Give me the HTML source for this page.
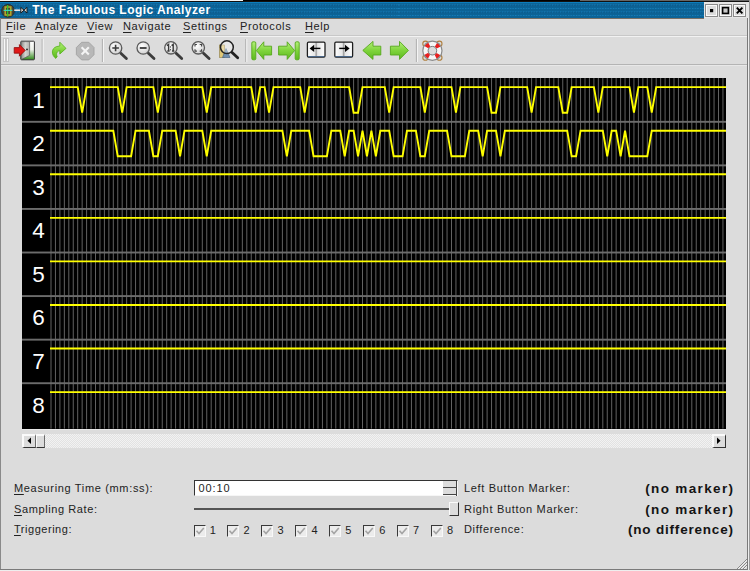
<!DOCTYPE html>
<html><head><meta charset="utf-8">
<style>
html,body{margin:0;padding:0;}
body{width:750px;height:571px;overflow:hidden;position:relative;background:#dcdcdc;font-family:"Liberation Sans",sans-serif;color:#222;}
.a{position:absolute;}
.t{position:absolute;white-space:nowrap;font-size:11px;line-height:13px;letter-spacing:0.6px;}
.lbl{position:absolute;left:24.5px;width:28px;text-align:center;color:#fff;font-size:22.5px;line-height:25px;}
u{text-decoration:underline;text-underline-offset:2px;text-decoration-thickness:1px;}
.tb{background-color:#0b6396;background-image:radial-gradient(circle at 50% 50%, rgba(40,160,225,0.75) 0, rgba(40,160,225,0.0) 0.9px),radial-gradient(circle at 50% 50%, rgba(0,40,70,0.35) 0, rgba(0,40,70,0) 1px);background-size:2.67px 3.5px,2.67px 3.5px;background-position:0.5px 1.5px,1.8px 3.2px;}
.cb{position:absolute;top:525px;width:10px;height:10px;border-top:1px solid #3a3a3a;border-left:1px solid #3a3a3a;border-right:1px solid #f8f8f8;border-bottom:1px solid #f8f8f8;background:#ececec;}
.cb svg{position:absolute;left:0;top:0}
.cbl{position:absolute;top:524px;font-size:11px;line-height:13px;color:#222;}
</style></head><body>
<!-- top strip -->
<div class="a" style="left:0;top:0;width:243px;height:1px;background:#f4f4f4"></div>
<div class="a" style="left:243px;top:0;width:337px;height:1.5px;background:#000"></div><div class="a" style="left:580px;top:0;width:170px;height:1.5px;background:#666"></div>
<div class="a" style="left:0;top:1px;width:750px;height:1px;background:#111"></div>
<!-- title bar -->
<svg class="a" style="left:0;top:2px" width="704" height="16"><defs><pattern id="ptb" x="0.3" y="0" width="2.64" height="7" patternUnits="userSpaceOnUse"><rect x="0" y="0" width="2.64" height="7" fill="#0c6396"/><rect x="0.2" y="2" width="1" height="1.6" fill="#1478b4"/><rect x="1.2" y="3.2" width="1" height="1" fill="#0a5283"/><rect x="0.2" y="6.1" width="1.1" height="1" fill="#1a8ccc"/><rect x="1.2" y="6.9" width="1" height="0.1" fill="#0a5283"/></pattern></defs><rect width="704" height="16" fill="url(#ptb)"/></svg>
<div class="a" style="left:0;top:2px;width:704px;height:1px;background:#0c7dbd"></div>
<div class="a" style="left:0;top:17.5px;width:704px;height:1px;background:#7a7066"></div>
<div class="a" style="left:704px;top:2px;width:46px;height:16px;background:#e6e6e6"></div>
<div class="t" style="left:32.2px;top:3px;font-size:12px;line-height:14px;font-weight:bold;color:#fff;letter-spacing:0.45px">The Fabulous Logic Analyzer</div>
<!-- window frame -->
<div class="a" style="left:0;top:18px;width:1.3px;height:553px;background:#8a8a8a"></div>
<div class="a" style="left:747px;top:18px;width:1px;height:553px;background:#7a7a7a"></div>
<div class="a" style="left:748px;top:18px;width:1px;height:553px;background:#eeeeee"></div>
<div class="a" style="left:749px;top:0;width:1px;height:571px;background:#9a9a9a"></div>
<div class="a" style="left:0;top:569px;width:748px;height:1px;background:#7a7a7a"></div>
<div class="a" style="left:0;top:570px;width:750px;height:1px;background:#eeeeee"></div>
<!-- menu -->
<div class="t" style="left:6px;top:20px"><u>F</u>ile</div>
<div class="t" style="left:35px;top:20px"><u>A</u>nalyze</div>
<div class="t" style="left:87px;top:20px"><u>V</u>iew</div>
<div class="t" style="left:123px;top:20px"><u>N</u>avigate</div>
<div class="t" style="left:183px;top:20px"><u>S</u>ettings</div>
<div class="t" style="left:240px;top:20px"><u>P</u>rotocols</div>
<div class="t" style="left:305px;top:20px"><u>H</u>elp</div>
<div class="a" style="left:1px;top:35px;width:746px;height:1px;background:#c8c8c8"></div>
<div class="a" style="left:1px;top:36px;width:746px;height:1px;background:#f2f2f2"></div>
<div class="a" style="left:1px;top:64px;width:746px;height:1px;background:#b4b4b4"></div>
<div class="a" style="left:1px;top:65px;width:746px;height:1px;background:#e8e8e8"></div>
<svg class="a" style="left:0;top:0" width="750" height="70" viewBox="0 0 750 70">
<defs>
<linearGradient id="gdoor" x1="0" y1="0" x2="0" y2="1"><stop offset="0" stop-color="#fff"/><stop offset="0.45" stop-color="#eef2ea"/><stop offset="1" stop-color="#2d8a16"/></linearGradient>
<linearGradient id="gpanel" x1="0" y1="0" x2="1" y2="0"><stop offset="0" stop-color="#8c8c88"/><stop offset="0.5" stop-color="#d4d4d0"/><stop offset="1" stop-color="#b0b0ac"/></linearGradient>
<linearGradient id="ggreen" x1="0" y1="0" x2="0" y2="1"><stop offset="0" stop-color="#b4f07a"/><stop offset="0.5" stop-color="#7fd43c"/><stop offset="1" stop-color="#5cb81e"/></linearGradient>
<radialGradient id="glens" cx="0.4" cy="0.35" r="0.7"><stop offset="0" stop-color="#ffffff"/><stop offset="1" stop-color="#cfcfcf"/></radialGradient>
<linearGradient id="gpage" x1="0" y1="0" x2="1" y2="0"><stop offset="0" stop-color="#fff"/><stop offset="0.42" stop-color="#e6e6e6"/><stop offset="0.5" stop-color="#9a9a9a"/><stop offset="0.58" stop-color="#e6e6e6"/><stop offset="1" stop-color="#fff"/></linearGradient>
</defs>
<!-- title icon -->
<circle cx="8" cy="10.8" r="6.4" fill="#45453a" stroke="#2a2a24" stroke-width="0.8"/>
<rect x="5.2" y="7" width="5.6" height="8" fill="none" stroke="#b8aa28" stroke-width="1.5"/>
<path d="M7.6,5V16.6" stroke="#34c02c" stroke-width="1.3"/>
<path d="M3.6,10.4H12.4" stroke="#3cd4b8" stroke-width="1.2"/>
<path d="M14.2,10.2H21.5" stroke="#e8e8e8" stroke-width="1.6"/>
<path d="M20.8,7.4L24,10.2L20.8,13ZM27,7.4L23.8,10.2L27,13Z" fill="#d8d8d8" stroke="#111" stroke-width="0.9"/>
<!-- window buttons -->
<g>
<rect x="705.5" y="4.5" width="12" height="12" fill="#dcdcdc" stroke="#8a8a8a" stroke-width="1"/>
<rect x="706.5" y="5.5" width="10" height="10" fill="none" stroke="#fafafa" stroke-width="1"/>
<rect x="710" y="9" width="3.2" height="3.2" fill="#000"/>
<rect x="719.5" y="4.5" width="12" height="12" fill="#dcdcdc" stroke="#8a8a8a" stroke-width="1"/>
<rect x="720.5" y="5.5" width="10" height="10" fill="none" stroke="#fafafa" stroke-width="1"/>
<rect x="722.6" y="7.6" width="5.8" height="5.8" fill="#c8c8c8" stroke="#000" stroke-width="1.6"/>
<rect x="733.5" y="4.5" width="12" height="12" fill="#dcdcdc" stroke="#8a8a8a" stroke-width="1"/>
<rect x="734.5" y="5.5" width="10" height="10" fill="none" stroke="#fafafa" stroke-width="1"/>
<path d="M736.8,7.6L742.4,13.4M742.4,7.6L736.8,13.4" stroke="#000" stroke-width="1.9"/>
</g>
<!-- grip -->
<rect x="3.3" y="38.7" width="2.4" height="22.8" fill="#f8f8f8" stroke="#b0b0b0" stroke-width="0.6"/>
<rect x="6.3" y="38.7" width="2.4" height="22.8" fill="#f8f8f8" stroke="#b0b0b0" stroke-width="0.6"/>
<!-- separators -->
<g stroke-width="1">
<path d="M42.2,39V62M102.4,39V62M245.8,39V62M416.4,39V62" stroke="#a8a8a8"/>
<path d="M43.2,39V62M103.4,39V62M246.8,39V62M417.4,39V62" stroke="#f6f6f6"/>
</g>
<!-- exit door -->
<rect x="20.8" y="41.2" width="13.6" height="18.6" rx="0.8" fill="url(#gdoor)" stroke="#333" stroke-width="1"/>
<path d="M21.2,41.6H29.6V55.4L21.2,59.6Z" fill="url(#gpanel)" stroke="#555" stroke-width="0.7"/>
<circle cx="27" cy="49.4" r="0.9" fill="#222"/>
<path d="M14.2,47.6H19.4V44.6L25.2,50.4L19.4,56.2V53.2H14.2Z" fill="#e01818" stroke="#8a0a0a" stroke-width="0.8"/>
<!-- green curved arrow -->
<path d="M55.8,58.4C51.2,55 51,48.4 56.6,46.6L59.8,46V42.2L66,48.4L59.8,54V50.6C56.8,51.2 55.8,53.8 57.2,56.6Z" fill="url(#ggreen)" stroke="#52ae18" stroke-width="0.8"/>
<!-- stop -->
<path d="M81.6,42.3H88.8L94,47.5V54.7L88.8,59.9H81.6L76.4,54.7V47.5Z" fill="#b8b8b8" stroke="#a2a2a2" stroke-width="0.9"/>
<path d="M81.6,47.3L88.8,54.5M88.8,47.3L81.6,54.5" stroke="#f4f4f4" stroke-width="2.1"/>
<!-- magnifiers -->
<g id="mag">
<path d="M120.8,53.2L126.4,58.6" stroke="#3c3c3c" stroke-width="2.8" stroke-linecap="round"/>
<circle cx="115.6" cy="48" r="6.2" fill="url(#glens)" stroke="#5a5a5a" stroke-width="1.3"/>
<path d="M112.3,48H118.9M115.6,44.7V51.3" stroke="#3a3a3a" stroke-width="1.6"/>
</g>
<path d="M148.4,53.2L154,58.6" stroke="#3c3c3c" stroke-width="2.8" stroke-linecap="round"/>
<circle cx="143.2" cy="48" r="6.2" fill="url(#glens)" stroke="#5a5a5a" stroke-width="1.3"/>
<path d="M139.8,48H146.6" stroke="#3a3a3a" stroke-width="1.8"/>
<path d="M176.1,53.2L181.7,58.6" stroke="#3c3c3c" stroke-width="2.8" stroke-linecap="round"/>
<circle cx="170.9" cy="47.8" r="6.2" fill="url(#glens)" stroke="#5a5a5a" stroke-width="1.3"/>
<path d="M167,45.6L168.6,44.4V51M167.3,51H169.6M171.6,45.6L173.2,44.4V51M172,51H174.3" stroke="#3a3a3a" stroke-width="1.4" fill="none"/><rect x="169.9" y="46.4" width="1.1" height="1.1" fill="#3a3a3a"/><rect x="169.9" y="49.2" width="1.1" height="1.1" fill="#3a3a3a"/>
<path d="M203.5,53.2L209.1,58.6" stroke="#3c3c3c" stroke-width="2.8" stroke-linecap="round"/>
<circle cx="198.3" cy="47.8" r="6.2" fill="url(#glens)" stroke="#5a5a5a" stroke-width="1.3"/>
<path d="M195,46.4V44.5H196.9M199.7,44.5H201.6V46.4M201.6,49.2V51.1H199.7M196.9,51.1H195V49.2" stroke="#444" stroke-width="1.1" fill="none"/>
<!-- image zoom -->
<rect x="219.6" y="45" width="5" height="12.5" fill="#e0c878" stroke="#8a7a40" stroke-width="0.6"/>
<path d="M222.5,57.5L226,48.6L230,57.5Z" fill="#6f8fb0" stroke="#3c5a78" stroke-width="0.6"/>
<path d="M232.1,52.4L237.7,57.8" stroke="#222" stroke-width="2.8" stroke-linecap="round"/>
<circle cx="226.9" cy="47.2" r="6.4" fill="rgba(255,255,255,0.35)" stroke="#222" stroke-width="1.5"/>
<!-- nav first/last -->
<g fill="url(#ggreen)" stroke="#56a81c" stroke-width="0.9" stroke-linejoin="round">
<rect x="251.8" y="41.8" width="4" height="18" rx="1.2"/>
<path d="M256.4,50.6L263.8,41.8V46.2H271.6V55H263.8V59.4Z"/>
<rect x="295.2" y="41.8" width="4" height="18" rx="1.2"/>
<path d="M294.6,50.6L287.2,41.8V46.2H278.6V55H287.2V59.4Z"/>
<path d="M362.8,50.4L373,41.4V46.2H380.8V55H373V59.4Z"/>
<path d="M408.4,50.4L399.5,41.4V46.2H390.4V55H399.5V59.4Z"/>
</g>
<!-- books -->
<g>
<rect x="307.4" y="42.2" width="17.6" height="14.8" rx="1.2" fill="url(#gpage)" stroke="#1e1e1e" stroke-width="1.3"/>
<path d="M308,56.6H324.4" stroke="#4a6a90" stroke-width="1"/>
<path d="M309.6,48.4L314.2,44.8V52Z" fill="#000"/>
<path d="M313,48.4H320.4" stroke="#000" stroke-width="1.4"/>
<rect x="334.8" y="42.2" width="17.8" height="14.8" rx="1.2" fill="url(#gpage)" stroke="#1e1e1e" stroke-width="1.3"/>
<path d="M335.4,56.6H352" stroke="#4a6a90" stroke-width="1"/>
<path d="M349.6,48.4L345,44.8V52Z" fill="#000"/>
<path d="M339.2,48.4H346.4" stroke="#000" stroke-width="1.4"/>
</g>
<!-- lifebuoy -->
<g>
<circle cx="425.4" cy="43.7" r="2.6" fill="none" stroke="#b08040" stroke-width="1.1"/>
<circle cx="439.4" cy="43.7" r="2.6" fill="none" stroke="#b08040" stroke-width="1.1"/>
<circle cx="425.4" cy="57.7" r="2.6" fill="none" stroke="#b08040" stroke-width="1.1"/>
<circle cx="439.4" cy="57.7" r="2.6" fill="none" stroke="#b08040" stroke-width="1.1"/>
<circle cx="432.4" cy="50.7" r="7" fill="none" stroke="#f6f6f6" stroke-width="5.2"/>
<circle cx="432.4" cy="50.7" r="7" fill="none" stroke="#e82020" stroke-width="4.6" stroke-dasharray="4 6.996" stroke-dashoffset="-3.5"/>
<circle cx="432.4" cy="50.7" r="9.6" fill="none" stroke="#8a8a8a" stroke-width="1.2"/>
<circle cx="432.4" cy="50.7" r="4.3" fill="#dcdcdc" stroke="#7a7a7a" stroke-width="1"/>
</g>
</svg>

<svg width="704" height="351" viewBox="22 78 704 351" style="position:absolute;left:22px;top:78px;display:block">
<rect x="22" y="78" width="704" height="351" fill="#000"/>
<path d="M51.00,78V428.6 M55.45,78V428.6 M59.90,78V428.6 M64.35,78V428.6 M68.80,78V428.6 M73.25,78V428.6 M77.70,78V428.6 M82.15,78V428.6 M86.60,78V428.6 M91.05,78V428.6 M95.50,78V428.6 M99.95,78V428.6 M104.40,78V428.6 M108.85,78V428.6 M113.30,78V428.6 M117.75,78V428.6 M122.20,78V428.6 M126.65,78V428.6 M131.10,78V428.6 M135.55,78V428.6 M140.00,78V428.6 M144.45,78V428.6 M148.90,78V428.6 M153.35,78V428.6 M157.80,78V428.6 M162.25,78V428.6 M166.70,78V428.6 M171.15,78V428.6 M175.60,78V428.6 M180.05,78V428.6 M184.50,78V428.6 M188.95,78V428.6 M193.40,78V428.6 M197.85,78V428.6 M202.30,78V428.6 M206.75,78V428.6 M211.20,78V428.6 M215.65,78V428.6 M220.10,78V428.6 M224.55,78V428.6 M229.00,78V428.6 M233.45,78V428.6 M237.90,78V428.6 M242.35,78V428.6 M246.80,78V428.6 M251.25,78V428.6 M255.70,78V428.6 M260.15,78V428.6 M264.60,78V428.6 M269.05,78V428.6 M273.50,78V428.6 M277.95,78V428.6 M282.40,78V428.6 M286.85,78V428.6 M291.30,78V428.6 M295.75,78V428.6 M300.20,78V428.6 M304.65,78V428.6 M309.10,78V428.6 M313.55,78V428.6 M318.00,78V428.6 M322.45,78V428.6 M326.90,78V428.6 M331.35,78V428.6 M335.80,78V428.6 M340.25,78V428.6 M344.70,78V428.6 M349.15,78V428.6 M353.60,78V428.6 M358.05,78V428.6 M362.50,78V428.6 M366.95,78V428.6 M371.40,78V428.6 M375.85,78V428.6 M380.30,78V428.6 M384.75,78V428.6 M389.20,78V428.6 M393.65,78V428.6 M398.10,78V428.6 M402.55,78V428.6 M407.00,78V428.6 M411.45,78V428.6 M415.90,78V428.6 M420.35,78V428.6 M424.80,78V428.6 M429.25,78V428.6 M433.70,78V428.6 M438.15,78V428.6 M442.60,78V428.6 M447.05,78V428.6 M451.50,78V428.6 M455.95,78V428.6 M460.40,78V428.6 M464.85,78V428.6 M469.30,78V428.6 M473.75,78V428.6 M478.20,78V428.6 M482.65,78V428.6 M487.10,78V428.6 M491.55,78V428.6 M496.00,78V428.6 M500.45,78V428.6 M504.90,78V428.6 M509.35,78V428.6 M513.80,78V428.6 M518.25,78V428.6 M522.70,78V428.6 M527.15,78V428.6 M531.60,78V428.6 M536.05,78V428.6 M540.50,78V428.6 M544.95,78V428.6 M549.40,78V428.6 M553.85,78V428.6 M558.30,78V428.6 M562.75,78V428.6 M567.20,78V428.6 M571.65,78V428.6 M576.10,78V428.6 M580.55,78V428.6 M585.00,78V428.6 M589.45,78V428.6 M593.90,78V428.6 M598.35,78V428.6 M602.80,78V428.6 M607.25,78V428.6 M611.70,78V428.6 M616.15,78V428.6 M620.60,78V428.6 M625.05,78V428.6 M629.50,78V428.6 M633.95,78V428.6 M638.40,78V428.6 M642.85,78V428.6 M647.30,78V428.6 M651.75,78V428.6 M656.20,78V428.6 M660.65,78V428.6 M665.10,78V428.6 M669.55,78V428.6 M674.00,78V428.6 M678.45,78V428.6 M682.90,78V428.6 M687.35,78V428.6 M691.80,78V428.6 M696.25,78V428.6 M700.70,78V428.6 M705.15,78V428.6 M709.60,78V428.6 M714.05,78V428.6 M718.50,78V428.6 M722.95,78V428.6" stroke="#747474" stroke-width="0.85" fill="none"/>
<rect x="22" y="120.85" width="704" height="1.9" fill="#6c6c6c"/>
<rect x="22" y="164.42" width="704" height="1.9" fill="#6c6c6c"/>
<rect x="22" y="207.99" width="704" height="1.9" fill="#6c6c6c"/>
<rect x="22" y="251.56" width="704" height="1.9" fill="#6c6c6c"/>
<rect x="22" y="295.13" width="704" height="1.9" fill="#6c6c6c"/>
<rect x="22" y="338.70" width="704" height="1.9" fill="#6c6c6c"/>
<rect x="22" y="382.27" width="704" height="1.9" fill="#6c6c6c"/>
<path d="M50,87.13 L51.00,87.13 L55.45,87.13 L59.90,87.13 L64.35,87.13 L68.80,87.13 L73.25,87.13 L77.70,87.13 L82.15,112.68 L86.60,87.13 L91.05,87.13 L95.50,87.13 L99.95,87.13 L104.40,87.13 L108.85,87.13 L113.30,87.13 L117.75,87.13 L122.20,112.68 L126.65,87.13 L131.10,87.13 L135.55,87.13 L140.00,87.13 L144.45,87.13 L148.90,87.13 L153.35,87.13 L157.80,112.68 L162.25,87.13 L166.70,87.13 L171.15,87.13 L175.60,87.13 L180.05,87.13 L184.50,87.13 L188.95,87.13 L193.40,87.13 L197.85,87.13 L202.30,87.13 L206.75,112.68 L211.20,87.13 L215.65,87.13 L220.10,87.13 L224.55,87.13 L229.00,87.13 L233.45,87.13 L237.90,87.13 L242.35,87.13 L246.80,87.13 L251.25,87.13 L255.70,112.68 L260.15,87.13 L264.60,87.13 L269.05,112.68 L273.50,87.13 L277.95,87.13 L282.40,87.13 L286.85,87.13 L291.30,87.13 L295.75,87.13 L300.20,87.13 L304.65,112.68 L309.10,87.13 L313.55,87.13 L318.00,87.13 L322.45,87.13 L326.90,87.13 L331.35,87.13 L335.80,87.13 L340.25,87.13 L344.70,87.13 L349.15,87.13 L353.60,112.68 L358.05,112.68 L362.50,87.13 L366.95,87.13 L371.40,87.13 L375.85,87.13 L380.30,87.13 L384.75,87.13 L389.20,112.68 L393.65,87.13 L398.10,87.13 L402.55,87.13 L407.00,87.13 L411.45,87.13 L415.90,87.13 L420.35,87.13 L424.80,112.68 L429.25,87.13 L433.70,87.13 L438.15,87.13 L442.60,87.13 L447.05,87.13 L451.50,87.13 L455.95,112.68 L460.40,87.13 L464.85,87.13 L469.30,87.13 L473.75,87.13 L478.20,87.13 L482.65,87.13 L487.10,87.13 L491.55,112.68 L496.00,112.68 L500.45,87.13 L504.90,87.13 L509.35,87.13 L513.80,87.13 L518.25,87.13 L522.70,87.13 L527.15,87.13 L531.60,112.68 L536.05,87.13 L540.50,87.13 L544.95,87.13 L549.40,87.13 L553.85,87.13 L558.30,87.13 L562.75,112.68 L567.20,112.68 L571.65,87.13 L576.10,87.13 L580.55,87.13 L585.00,87.13 L589.45,87.13 L593.90,87.13 L598.35,112.68 L602.80,87.13 L607.25,87.13 L611.70,87.13 L616.15,87.13 L620.60,87.13 L625.05,87.13 L629.50,87.13 L633.95,112.68 L638.40,87.13 L642.85,87.13 L647.30,87.13 L651.75,112.68 L656.20,87.13 L660.65,87.13 L665.10,87.13 L669.55,87.13 L674.00,87.13 L678.45,87.13 L682.90,87.13 L687.35,87.13 L691.80,87.13 L696.25,87.13 L700.70,87.13 L705.15,87.13 L709.60,87.13 L714.05,87.13 L718.50,87.13 L722.95,87.13 L726.00,87.13" stroke="#ffff00" stroke-width="1.9" fill="none" stroke-linejoin="miter"/>
<path d="M50,130.70 L51.00,130.70 L55.45,130.70 L59.90,130.70 L64.35,130.70 L68.80,130.70 L73.25,130.70 L77.70,130.70 L82.15,130.70 L86.60,130.70 L91.05,130.70 L95.50,130.70 L99.95,130.70 L104.40,130.70 L108.85,130.70 L113.30,130.70 L117.75,156.25 L122.20,156.25 L126.65,156.25 L131.10,156.25 L135.55,130.70 L140.00,130.70 L144.45,130.70 L148.90,130.70 L153.35,156.25 L157.80,156.25 L162.25,130.70 L166.70,130.70 L171.15,130.70 L175.60,130.70 L180.05,156.25 L184.50,130.70 L188.95,130.70 L193.40,130.70 L197.85,130.70 L202.30,130.70 L206.75,156.25 L211.20,130.70 L215.65,130.70 L220.10,130.70 L224.55,130.70 L229.00,130.70 L233.45,130.70 L237.90,130.70 L242.35,130.70 L246.80,130.70 L251.25,130.70 L255.70,130.70 L260.15,130.70 L264.60,130.70 L269.05,130.70 L273.50,130.70 L277.95,130.70 L282.40,130.70 L286.85,156.25 L291.30,130.70 L295.75,130.70 L300.20,130.70 L304.65,130.70 L309.10,130.70 L313.55,156.25 L318.00,156.25 L322.45,156.25 L326.90,156.25 L331.35,130.70 L335.80,130.70 L340.25,130.70 L344.70,156.25 L349.15,130.70 L353.60,130.70 L358.05,156.25 L362.50,130.70 L366.95,156.25 L371.40,130.70 L375.85,156.25 L380.30,130.70 L384.75,130.70 L389.20,130.70 L393.65,156.25 L398.10,156.25 L402.55,156.25 L407.00,130.70 L411.45,130.70 L415.90,130.70 L420.35,156.25 L424.80,156.25 L429.25,130.70 L433.70,130.70 L438.15,130.70 L442.60,130.70 L447.05,130.70 L451.50,156.25 L455.95,156.25 L460.40,156.25 L464.85,156.25 L469.30,130.70 L473.75,130.70 L478.20,130.70 L482.65,156.25 L487.10,130.70 L491.55,130.70 L496.00,130.70 L500.45,156.25 L504.90,130.70 L509.35,130.70 L513.80,130.70 L518.25,130.70 L522.70,130.70 L527.15,130.70 L531.60,130.70 L536.05,130.70 L540.50,130.70 L544.95,130.70 L549.40,130.70 L553.85,130.70 L558.30,130.70 L562.75,130.70 L567.20,130.70 L571.65,156.25 L576.10,156.25 L580.55,130.70 L585.00,130.70 L589.45,130.70 L593.90,130.70 L598.35,130.70 L602.80,130.70 L607.25,156.25 L611.70,130.70 L616.15,130.70 L620.60,156.25 L625.05,130.70 L629.50,156.25 L633.95,156.25 L638.40,156.25 L642.85,156.25 L647.30,156.25 L651.75,130.70 L656.20,130.70 L660.65,130.70 L665.10,130.70 L669.55,130.70 L674.00,130.70 L678.45,130.70 L682.90,130.70 L687.35,130.70 L691.80,130.70 L696.25,130.70 L700.70,130.70 L705.15,130.70 L709.60,130.70 L714.05,130.70 L718.50,130.70 L722.95,130.70 L726.00,130.70" stroke="#ffff00" stroke-width="1.9" fill="none" stroke-linejoin="miter"/>
<path d="M50,174.27 L51.00,174.27 L55.45,174.27 L59.90,174.27 L64.35,174.27 L68.80,174.27 L73.25,174.27 L77.70,174.27 L82.15,174.27 L86.60,174.27 L91.05,174.27 L95.50,174.27 L99.95,174.27 L104.40,174.27 L108.85,174.27 L113.30,174.27 L117.75,174.27 L122.20,174.27 L126.65,174.27 L131.10,174.27 L135.55,174.27 L140.00,174.27 L144.45,174.27 L148.90,174.27 L153.35,174.27 L157.80,174.27 L162.25,174.27 L166.70,174.27 L171.15,174.27 L175.60,174.27 L180.05,174.27 L184.50,174.27 L188.95,174.27 L193.40,174.27 L197.85,174.27 L202.30,174.27 L206.75,174.27 L211.20,174.27 L215.65,174.27 L220.10,174.27 L224.55,174.27 L229.00,174.27 L233.45,174.27 L237.90,174.27 L242.35,174.27 L246.80,174.27 L251.25,174.27 L255.70,174.27 L260.15,174.27 L264.60,174.27 L269.05,174.27 L273.50,174.27 L277.95,174.27 L282.40,174.27 L286.85,174.27 L291.30,174.27 L295.75,174.27 L300.20,174.27 L304.65,174.27 L309.10,174.27 L313.55,174.27 L318.00,174.27 L322.45,174.27 L326.90,174.27 L331.35,174.27 L335.80,174.27 L340.25,174.27 L344.70,174.27 L349.15,174.27 L353.60,174.27 L358.05,174.27 L362.50,174.27 L366.95,174.27 L371.40,174.27 L375.85,174.27 L380.30,174.27 L384.75,174.27 L389.20,174.27 L393.65,174.27 L398.10,174.27 L402.55,174.27 L407.00,174.27 L411.45,174.27 L415.90,174.27 L420.35,174.27 L424.80,174.27 L429.25,174.27 L433.70,174.27 L438.15,174.27 L442.60,174.27 L447.05,174.27 L451.50,174.27 L455.95,174.27 L460.40,174.27 L464.85,174.27 L469.30,174.27 L473.75,174.27 L478.20,174.27 L482.65,174.27 L487.10,174.27 L491.55,174.27 L496.00,174.27 L500.45,174.27 L504.90,174.27 L509.35,174.27 L513.80,174.27 L518.25,174.27 L522.70,174.27 L527.15,174.27 L531.60,174.27 L536.05,174.27 L540.50,174.27 L544.95,174.27 L549.40,174.27 L553.85,174.27 L558.30,174.27 L562.75,174.27 L567.20,174.27 L571.65,174.27 L576.10,174.27 L580.55,174.27 L585.00,174.27 L589.45,174.27 L593.90,174.27 L598.35,174.27 L602.80,174.27 L607.25,174.27 L611.70,174.27 L616.15,174.27 L620.60,174.27 L625.05,174.27 L629.50,174.27 L633.95,174.27 L638.40,174.27 L642.85,174.27 L647.30,174.27 L651.75,174.27 L656.20,174.27 L660.65,174.27 L665.10,174.27 L669.55,174.27 L674.00,174.27 L678.45,174.27 L682.90,174.27 L687.35,174.27 L691.80,174.27 L696.25,174.27 L700.70,174.27 L705.15,174.27 L709.60,174.27 L714.05,174.27 L718.50,174.27 L722.95,174.27 L726.00,174.27" stroke="#ffff00" stroke-width="1.9" fill="none" stroke-linejoin="miter"/>
<path d="M50,217.84 L51.00,217.84 L55.45,217.84 L59.90,217.84 L64.35,217.84 L68.80,217.84 L73.25,217.84 L77.70,217.84 L82.15,217.84 L86.60,217.84 L91.05,217.84 L95.50,217.84 L99.95,217.84 L104.40,217.84 L108.85,217.84 L113.30,217.84 L117.75,217.84 L122.20,217.84 L126.65,217.84 L131.10,217.84 L135.55,217.84 L140.00,217.84 L144.45,217.84 L148.90,217.84 L153.35,217.84 L157.80,217.84 L162.25,217.84 L166.70,217.84 L171.15,217.84 L175.60,217.84 L180.05,217.84 L184.50,217.84 L188.95,217.84 L193.40,217.84 L197.85,217.84 L202.30,217.84 L206.75,217.84 L211.20,217.84 L215.65,217.84 L220.10,217.84 L224.55,217.84 L229.00,217.84 L233.45,217.84 L237.90,217.84 L242.35,217.84 L246.80,217.84 L251.25,217.84 L255.70,217.84 L260.15,217.84 L264.60,217.84 L269.05,217.84 L273.50,217.84 L277.95,217.84 L282.40,217.84 L286.85,217.84 L291.30,217.84 L295.75,217.84 L300.20,217.84 L304.65,217.84 L309.10,217.84 L313.55,217.84 L318.00,217.84 L322.45,217.84 L326.90,217.84 L331.35,217.84 L335.80,217.84 L340.25,217.84 L344.70,217.84 L349.15,217.84 L353.60,217.84 L358.05,217.84 L362.50,217.84 L366.95,217.84 L371.40,217.84 L375.85,217.84 L380.30,217.84 L384.75,217.84 L389.20,217.84 L393.65,217.84 L398.10,217.84 L402.55,217.84 L407.00,217.84 L411.45,217.84 L415.90,217.84 L420.35,217.84 L424.80,217.84 L429.25,217.84 L433.70,217.84 L438.15,217.84 L442.60,217.84 L447.05,217.84 L451.50,217.84 L455.95,217.84 L460.40,217.84 L464.85,217.84 L469.30,217.84 L473.75,217.84 L478.20,217.84 L482.65,217.84 L487.10,217.84 L491.55,217.84 L496.00,217.84 L500.45,217.84 L504.90,217.84 L509.35,217.84 L513.80,217.84 L518.25,217.84 L522.70,217.84 L527.15,217.84 L531.60,217.84 L536.05,217.84 L540.50,217.84 L544.95,217.84 L549.40,217.84 L553.85,217.84 L558.30,217.84 L562.75,217.84 L567.20,217.84 L571.65,217.84 L576.10,217.84 L580.55,217.84 L585.00,217.84 L589.45,217.84 L593.90,217.84 L598.35,217.84 L602.80,217.84 L607.25,217.84 L611.70,217.84 L616.15,217.84 L620.60,217.84 L625.05,217.84 L629.50,217.84 L633.95,217.84 L638.40,217.84 L642.85,217.84 L647.30,217.84 L651.75,217.84 L656.20,217.84 L660.65,217.84 L665.10,217.84 L669.55,217.84 L674.00,217.84 L678.45,217.84 L682.90,217.84 L687.35,217.84 L691.80,217.84 L696.25,217.84 L700.70,217.84 L705.15,217.84 L709.60,217.84 L714.05,217.84 L718.50,217.84 L722.95,217.84 L726.00,217.84" stroke="#ffff00" stroke-width="1.9" fill="none" stroke-linejoin="miter"/>
<path d="M50,261.41 L51.00,261.41 L55.45,261.41 L59.90,261.41 L64.35,261.41 L68.80,261.41 L73.25,261.41 L77.70,261.41 L82.15,261.41 L86.60,261.41 L91.05,261.41 L95.50,261.41 L99.95,261.41 L104.40,261.41 L108.85,261.41 L113.30,261.41 L117.75,261.41 L122.20,261.41 L126.65,261.41 L131.10,261.41 L135.55,261.41 L140.00,261.41 L144.45,261.41 L148.90,261.41 L153.35,261.41 L157.80,261.41 L162.25,261.41 L166.70,261.41 L171.15,261.41 L175.60,261.41 L180.05,261.41 L184.50,261.41 L188.95,261.41 L193.40,261.41 L197.85,261.41 L202.30,261.41 L206.75,261.41 L211.20,261.41 L215.65,261.41 L220.10,261.41 L224.55,261.41 L229.00,261.41 L233.45,261.41 L237.90,261.41 L242.35,261.41 L246.80,261.41 L251.25,261.41 L255.70,261.41 L260.15,261.41 L264.60,261.41 L269.05,261.41 L273.50,261.41 L277.95,261.41 L282.40,261.41 L286.85,261.41 L291.30,261.41 L295.75,261.41 L300.20,261.41 L304.65,261.41 L309.10,261.41 L313.55,261.41 L318.00,261.41 L322.45,261.41 L326.90,261.41 L331.35,261.41 L335.80,261.41 L340.25,261.41 L344.70,261.41 L349.15,261.41 L353.60,261.41 L358.05,261.41 L362.50,261.41 L366.95,261.41 L371.40,261.41 L375.85,261.41 L380.30,261.41 L384.75,261.41 L389.20,261.41 L393.65,261.41 L398.10,261.41 L402.55,261.41 L407.00,261.41 L411.45,261.41 L415.90,261.41 L420.35,261.41 L424.80,261.41 L429.25,261.41 L433.70,261.41 L438.15,261.41 L442.60,261.41 L447.05,261.41 L451.50,261.41 L455.95,261.41 L460.40,261.41 L464.85,261.41 L469.30,261.41 L473.75,261.41 L478.20,261.41 L482.65,261.41 L487.10,261.41 L491.55,261.41 L496.00,261.41 L500.45,261.41 L504.90,261.41 L509.35,261.41 L513.80,261.41 L518.25,261.41 L522.70,261.41 L527.15,261.41 L531.60,261.41 L536.05,261.41 L540.50,261.41 L544.95,261.41 L549.40,261.41 L553.85,261.41 L558.30,261.41 L562.75,261.41 L567.20,261.41 L571.65,261.41 L576.10,261.41 L580.55,261.41 L585.00,261.41 L589.45,261.41 L593.90,261.41 L598.35,261.41 L602.80,261.41 L607.25,261.41 L611.70,261.41 L616.15,261.41 L620.60,261.41 L625.05,261.41 L629.50,261.41 L633.95,261.41 L638.40,261.41 L642.85,261.41 L647.30,261.41 L651.75,261.41 L656.20,261.41 L660.65,261.41 L665.10,261.41 L669.55,261.41 L674.00,261.41 L678.45,261.41 L682.90,261.41 L687.35,261.41 L691.80,261.41 L696.25,261.41 L700.70,261.41 L705.15,261.41 L709.60,261.41 L714.05,261.41 L718.50,261.41 L722.95,261.41 L726.00,261.41" stroke="#ffff00" stroke-width="1.9" fill="none" stroke-linejoin="miter"/>
<path d="M50,304.98 L51.00,304.98 L55.45,304.98 L59.90,304.98 L64.35,304.98 L68.80,304.98 L73.25,304.98 L77.70,304.98 L82.15,304.98 L86.60,304.98 L91.05,304.98 L95.50,304.98 L99.95,304.98 L104.40,304.98 L108.85,304.98 L113.30,304.98 L117.75,304.98 L122.20,304.98 L126.65,304.98 L131.10,304.98 L135.55,304.98 L140.00,304.98 L144.45,304.98 L148.90,304.98 L153.35,304.98 L157.80,304.98 L162.25,304.98 L166.70,304.98 L171.15,304.98 L175.60,304.98 L180.05,304.98 L184.50,304.98 L188.95,304.98 L193.40,304.98 L197.85,304.98 L202.30,304.98 L206.75,304.98 L211.20,304.98 L215.65,304.98 L220.10,304.98 L224.55,304.98 L229.00,304.98 L233.45,304.98 L237.90,304.98 L242.35,304.98 L246.80,304.98 L251.25,304.98 L255.70,304.98 L260.15,304.98 L264.60,304.98 L269.05,304.98 L273.50,304.98 L277.95,304.98 L282.40,304.98 L286.85,304.98 L291.30,304.98 L295.75,304.98 L300.20,304.98 L304.65,304.98 L309.10,304.98 L313.55,304.98 L318.00,304.98 L322.45,304.98 L326.90,304.98 L331.35,304.98 L335.80,304.98 L340.25,304.98 L344.70,304.98 L349.15,304.98 L353.60,304.98 L358.05,304.98 L362.50,304.98 L366.95,304.98 L371.40,304.98 L375.85,304.98 L380.30,304.98 L384.75,304.98 L389.20,304.98 L393.65,304.98 L398.10,304.98 L402.55,304.98 L407.00,304.98 L411.45,304.98 L415.90,304.98 L420.35,304.98 L424.80,304.98 L429.25,304.98 L433.70,304.98 L438.15,304.98 L442.60,304.98 L447.05,304.98 L451.50,304.98 L455.95,304.98 L460.40,304.98 L464.85,304.98 L469.30,304.98 L473.75,304.98 L478.20,304.98 L482.65,304.98 L487.10,304.98 L491.55,304.98 L496.00,304.98 L500.45,304.98 L504.90,304.98 L509.35,304.98 L513.80,304.98 L518.25,304.98 L522.70,304.98 L527.15,304.98 L531.60,304.98 L536.05,304.98 L540.50,304.98 L544.95,304.98 L549.40,304.98 L553.85,304.98 L558.30,304.98 L562.75,304.98 L567.20,304.98 L571.65,304.98 L576.10,304.98 L580.55,304.98 L585.00,304.98 L589.45,304.98 L593.90,304.98 L598.35,304.98 L602.80,304.98 L607.25,304.98 L611.70,304.98 L616.15,304.98 L620.60,304.98 L625.05,304.98 L629.50,304.98 L633.95,304.98 L638.40,304.98 L642.85,304.98 L647.30,304.98 L651.75,304.98 L656.20,304.98 L660.65,304.98 L665.10,304.98 L669.55,304.98 L674.00,304.98 L678.45,304.98 L682.90,304.98 L687.35,304.98 L691.80,304.98 L696.25,304.98 L700.70,304.98 L705.15,304.98 L709.60,304.98 L714.05,304.98 L718.50,304.98 L722.95,304.98 L726.00,304.98" stroke="#ffff00" stroke-width="1.9" fill="none" stroke-linejoin="miter"/>
<path d="M50,348.55 L51.00,348.55 L55.45,348.55 L59.90,348.55 L64.35,348.55 L68.80,348.55 L73.25,348.55 L77.70,348.55 L82.15,348.55 L86.60,348.55 L91.05,348.55 L95.50,348.55 L99.95,348.55 L104.40,348.55 L108.85,348.55 L113.30,348.55 L117.75,348.55 L122.20,348.55 L126.65,348.55 L131.10,348.55 L135.55,348.55 L140.00,348.55 L144.45,348.55 L148.90,348.55 L153.35,348.55 L157.80,348.55 L162.25,348.55 L166.70,348.55 L171.15,348.55 L175.60,348.55 L180.05,348.55 L184.50,348.55 L188.95,348.55 L193.40,348.55 L197.85,348.55 L202.30,348.55 L206.75,348.55 L211.20,348.55 L215.65,348.55 L220.10,348.55 L224.55,348.55 L229.00,348.55 L233.45,348.55 L237.90,348.55 L242.35,348.55 L246.80,348.55 L251.25,348.55 L255.70,348.55 L260.15,348.55 L264.60,348.55 L269.05,348.55 L273.50,348.55 L277.95,348.55 L282.40,348.55 L286.85,348.55 L291.30,348.55 L295.75,348.55 L300.20,348.55 L304.65,348.55 L309.10,348.55 L313.55,348.55 L318.00,348.55 L322.45,348.55 L326.90,348.55 L331.35,348.55 L335.80,348.55 L340.25,348.55 L344.70,348.55 L349.15,348.55 L353.60,348.55 L358.05,348.55 L362.50,348.55 L366.95,348.55 L371.40,348.55 L375.85,348.55 L380.30,348.55 L384.75,348.55 L389.20,348.55 L393.65,348.55 L398.10,348.55 L402.55,348.55 L407.00,348.55 L411.45,348.55 L415.90,348.55 L420.35,348.55 L424.80,348.55 L429.25,348.55 L433.70,348.55 L438.15,348.55 L442.60,348.55 L447.05,348.55 L451.50,348.55 L455.95,348.55 L460.40,348.55 L464.85,348.55 L469.30,348.55 L473.75,348.55 L478.20,348.55 L482.65,348.55 L487.10,348.55 L491.55,348.55 L496.00,348.55 L500.45,348.55 L504.90,348.55 L509.35,348.55 L513.80,348.55 L518.25,348.55 L522.70,348.55 L527.15,348.55 L531.60,348.55 L536.05,348.55 L540.50,348.55 L544.95,348.55 L549.40,348.55 L553.85,348.55 L558.30,348.55 L562.75,348.55 L567.20,348.55 L571.65,348.55 L576.10,348.55 L580.55,348.55 L585.00,348.55 L589.45,348.55 L593.90,348.55 L598.35,348.55 L602.80,348.55 L607.25,348.55 L611.70,348.55 L616.15,348.55 L620.60,348.55 L625.05,348.55 L629.50,348.55 L633.95,348.55 L638.40,348.55 L642.85,348.55 L647.30,348.55 L651.75,348.55 L656.20,348.55 L660.65,348.55 L665.10,348.55 L669.55,348.55 L674.00,348.55 L678.45,348.55 L682.90,348.55 L687.35,348.55 L691.80,348.55 L696.25,348.55 L700.70,348.55 L705.15,348.55 L709.60,348.55 L714.05,348.55 L718.50,348.55 L722.95,348.55 L726.00,348.55" stroke="#ffff00" stroke-width="1.9" fill="none" stroke-linejoin="miter"/>
<path d="M50,392.12 L51.00,392.12 L55.45,392.12 L59.90,392.12 L64.35,392.12 L68.80,392.12 L73.25,392.12 L77.70,392.12 L82.15,392.12 L86.60,392.12 L91.05,392.12 L95.50,392.12 L99.95,392.12 L104.40,392.12 L108.85,392.12 L113.30,392.12 L117.75,392.12 L122.20,392.12 L126.65,392.12 L131.10,392.12 L135.55,392.12 L140.00,392.12 L144.45,392.12 L148.90,392.12 L153.35,392.12 L157.80,392.12 L162.25,392.12 L166.70,392.12 L171.15,392.12 L175.60,392.12 L180.05,392.12 L184.50,392.12 L188.95,392.12 L193.40,392.12 L197.85,392.12 L202.30,392.12 L206.75,392.12 L211.20,392.12 L215.65,392.12 L220.10,392.12 L224.55,392.12 L229.00,392.12 L233.45,392.12 L237.90,392.12 L242.35,392.12 L246.80,392.12 L251.25,392.12 L255.70,392.12 L260.15,392.12 L264.60,392.12 L269.05,392.12 L273.50,392.12 L277.95,392.12 L282.40,392.12 L286.85,392.12 L291.30,392.12 L295.75,392.12 L300.20,392.12 L304.65,392.12 L309.10,392.12 L313.55,392.12 L318.00,392.12 L322.45,392.12 L326.90,392.12 L331.35,392.12 L335.80,392.12 L340.25,392.12 L344.70,392.12 L349.15,392.12 L353.60,392.12 L358.05,392.12 L362.50,392.12 L366.95,392.12 L371.40,392.12 L375.85,392.12 L380.30,392.12 L384.75,392.12 L389.20,392.12 L393.65,392.12 L398.10,392.12 L402.55,392.12 L407.00,392.12 L411.45,392.12 L415.90,392.12 L420.35,392.12 L424.80,392.12 L429.25,392.12 L433.70,392.12 L438.15,392.12 L442.60,392.12 L447.05,392.12 L451.50,392.12 L455.95,392.12 L460.40,392.12 L464.85,392.12 L469.30,392.12 L473.75,392.12 L478.20,392.12 L482.65,392.12 L487.10,392.12 L491.55,392.12 L496.00,392.12 L500.45,392.12 L504.90,392.12 L509.35,392.12 L513.80,392.12 L518.25,392.12 L522.70,392.12 L527.15,392.12 L531.60,392.12 L536.05,392.12 L540.50,392.12 L544.95,392.12 L549.40,392.12 L553.85,392.12 L558.30,392.12 L562.75,392.12 L567.20,392.12 L571.65,392.12 L576.10,392.12 L580.55,392.12 L585.00,392.12 L589.45,392.12 L593.90,392.12 L598.35,392.12 L602.80,392.12 L607.25,392.12 L611.70,392.12 L616.15,392.12 L620.60,392.12 L625.05,392.12 L629.50,392.12 L633.95,392.12 L638.40,392.12 L642.85,392.12 L647.30,392.12 L651.75,392.12 L656.20,392.12 L660.65,392.12 L665.10,392.12 L669.55,392.12 L674.00,392.12 L678.45,392.12 L682.90,392.12 L687.35,392.12 L691.80,392.12 L696.25,392.12 L700.70,392.12 L705.15,392.12 L709.60,392.12 L714.05,392.12 L718.50,392.12 L722.95,392.12 L726.00,392.12" stroke="#ffff00" stroke-width="1.9" fill="none" stroke-linejoin="miter"/>
</svg>
<div class="lbl" style="top:87.5px">1</div>
<div class="lbl" style="top:131.1px">2</div>
<div class="lbl" style="top:174.7px">3</div>
<div class="lbl" style="top:218.2px">4</div>
<div class="lbl" style="top:261.8px">5</div>
<div class="lbl" style="top:305.4px">6</div>
<div class="lbl" style="top:348.9px">7</div>
<div class="lbl" style="top:392.5px">8</div>
<div class="a" style="left:22px;top:429px;width:704px;height:1px;background:#e8e8e8"></div>
<!-- scrollbar -->
<div class="a" style="left:22px;top:434px;width:704px;height:14px;background-color:#f2f2f2;background-image:linear-gradient(45deg,#e2e2e2 25%,transparent 25%,transparent 75%,#e2e2e2 75%),linear-gradient(45deg,#e2e2e2 25%,transparent 25%,transparent 75%,#e2e2e2 75%);background-size:2px 2px;background-position:0 0,1px 1px;"></div>
<div class="a" style="left:22px;top:434px;width:14px;height:14px;background:#dcdcdc;box-sizing:border-box;border-top:2px solid #fafafa;border-left:2px solid #fafafa;border-right:1.5px solid #6a6a6a;border-bottom:1px solid #333"></div>
<svg class="a" style="left:22px;top:434px" width="14" height="14"><path d="M5.5,6.7L9,3.4V10Z" fill="#000"/></svg>
<div class="a" style="left:36px;top:434px;width:9px;height:14px;background:#dcdcdc;box-sizing:border-box;border-top:2px solid #fafafa;border-left:1.5px solid #fafafa;border-right:1.5px solid #6a6a6a;border-bottom:1px solid #333"></div>
<div class="a" style="left:712px;top:434px;width:14px;height:14px;background:#dcdcdc;box-sizing:border-box;border-top:2px solid #fafafa;border-left:2px solid #fafafa;border-right:1.5px solid #333;border-bottom:1.5px solid #333"></div>
<svg class="a" style="left:712px;top:434px" width="14" height="14"><path d="M8.6,6.7L5,3.4V10Z" fill="#000"/></svg>
<!-- form -->
<div class="t" style="left:14px;top:482px;letter-spacing:0.66px"><u>M</u>easuring Time (mm:ss):</div>
<div class="t" style="left:14px;top:503px;letter-spacing:0.6px"><u>S</u>ampling Rate:</div>
<div class="t" style="left:14px;top:523px;letter-spacing:0.53px"><u>T</u>riggering:</div>
<div class="t" style="left:464px;top:482px;letter-spacing:0.68px">Left Button Marker:</div>
<div class="t" style="left:464px;top:503px;letter-spacing:0.69px">Right Button Marker:</div>
<div class="t" style="left:464px;top:523px;letter-spacing:0.67px">Difference:</div>
<div class="t" style="right:17px;top:482px;font-weight:bold;font-size:13.5px;letter-spacing:1.35px;margin-right:-1.35px;color:#141414">(no marker)</div>
<div class="t" style="right:17px;top:503px;font-weight:bold;font-size:13.5px;letter-spacing:1.35px;margin-right:-1.35px;color:#141414">(no marker)</div>
<div class="t" style="right:17px;top:523px;font-weight:bold;font-size:13.5px;letter-spacing:0.8px;margin-right:-0.8px;color:#141414">(no difference)</div>
<!-- input -->
<div class="a" style="left:193.5px;top:479.6px;width:264.8px;height:16.8px;background:#fff;box-sizing:border-box;border-top:1.6px solid #333;border-left:1px solid #333;border-right:1px solid #f6f6f6;border-bottom:1px solid #f6f6f6"></div>
<div class="t" style="left:198.4px;top:482px;letter-spacing:0.95px">00:10</div>
<div class="a" style="left:443.3px;top:481.2px;width:12.4px;height:6.2px;background:#dcdcdc;border-bottom:1px solid #444"></div>
<div class="a" style="left:443.3px;top:488.4px;width:12.4px;height:5.8px;background:#dcdcdc;border-bottom:1.4px solid #444"></div>
<div class="a" style="left:455.7px;top:481.2px;width:1.3px;height:14.4px;background:#444"></div>
<!-- slider -->
<div class="a" style="left:193.5px;top:508.2px;width:256px;height:1.5px;background:#555"></div>
<div class="a" style="left:448.9px;top:502.2px;width:9.9px;height:14px;background:#dcdcdc;box-sizing:border-box;border-top:1px solid #fafafa;border-left:1px solid #fafafa;border-right:1.2px solid #333;border-bottom:1.2px solid #333"></div>
<div class="cb" style="left:193.5px"><svg width="10" height="10"><path d="M1.5,4.8L4,7.6L8.8,2" stroke="#a4a4a4" stroke-width="1.6" fill="none"/></svg></div>
<div class="cbl" style="left:209.7px">1</div>
<div class="cb" style="left:227.4px"><svg width="10" height="10"><path d="M1.5,4.8L4,7.6L8.8,2" stroke="#a4a4a4" stroke-width="1.6" fill="none"/></svg></div>
<div class="cbl" style="left:243.6px">2</div>
<div class="cb" style="left:261.3px"><svg width="10" height="10"><path d="M1.5,4.8L4,7.6L8.8,2" stroke="#a4a4a4" stroke-width="1.6" fill="none"/></svg></div>
<div class="cbl" style="left:277.5px">3</div>
<div class="cb" style="left:295.2px"><svg width="10" height="10"><path d="M1.5,4.8L4,7.6L8.8,2" stroke="#a4a4a4" stroke-width="1.6" fill="none"/></svg></div>
<div class="cbl" style="left:311.4px">4</div>
<div class="cb" style="left:329.1px"><svg width="10" height="10"><path d="M1.5,4.8L4,7.6L8.8,2" stroke="#a4a4a4" stroke-width="1.6" fill="none"/></svg></div>
<div class="cbl" style="left:345.3px">5</div>
<div class="cb" style="left:363.0px"><svg width="10" height="10"><path d="M1.5,4.8L4,7.6L8.8,2" stroke="#a4a4a4" stroke-width="1.6" fill="none"/></svg></div>
<div class="cbl" style="left:379.2px">6</div>
<div class="cb" style="left:396.9px"><svg width="10" height="10"><path d="M1.5,4.8L4,7.6L8.8,2" stroke="#a4a4a4" stroke-width="1.6" fill="none"/></svg></div>
<div class="cbl" style="left:413.1px">7</div>
<div class="cb" style="left:430.8px"><svg width="10" height="10"><path d="M1.5,4.8L4,7.6L8.8,2" stroke="#a4a4a4" stroke-width="1.6" fill="none"/></svg></div>
<div class="cbl" style="left:447.0px">8</div>
<!-- resize grip -->
<svg class="a" style="left:734px;top:556px" width="14" height="14"><path d="M3,13L13,3M6,13L13,6M9,13L13,9" stroke="#8a8a8a" stroke-width="1"/><path d="M4,13L13,4M7,13L13,7M10,13L13,10" stroke="#f4f4f4" stroke-width="0.8"/></svg>
</body></html>
